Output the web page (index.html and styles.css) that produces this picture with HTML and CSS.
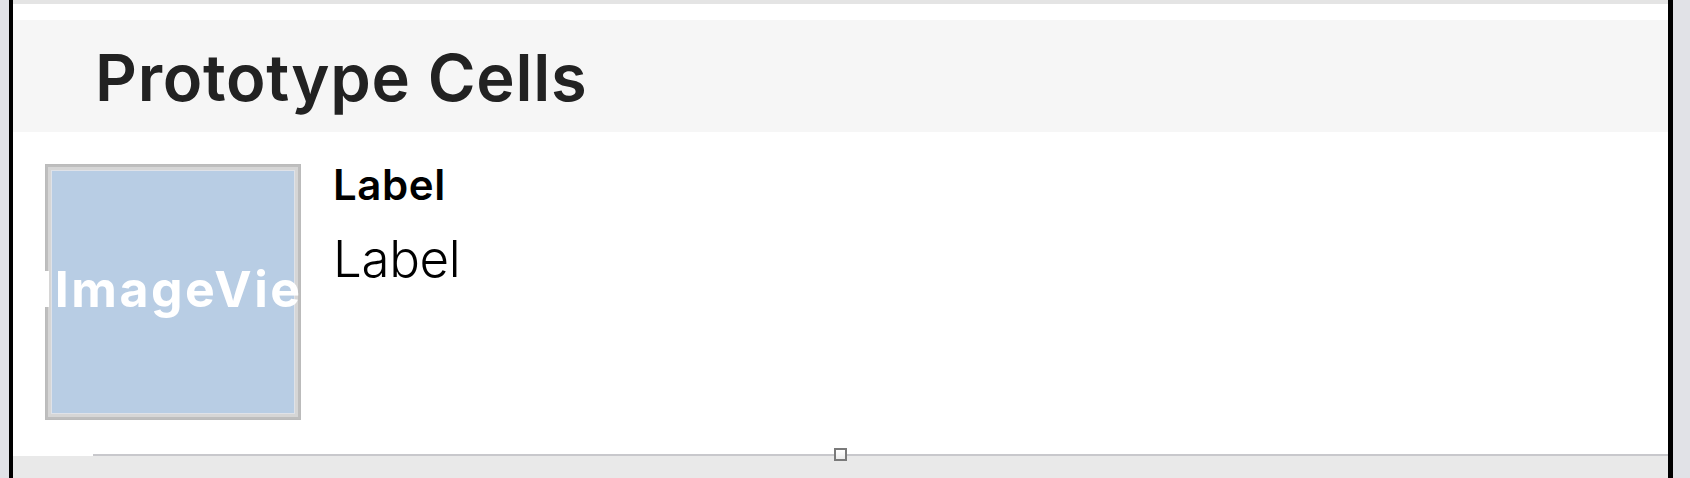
FILE: index.html
```html
<!DOCTYPE html>
<html lang="en">
<head>
<meta charset="utf-8">
<title>Prototype Cells</title>
<link rel="stylesheet" href="styles.css">
</head>
<body>
<div class="stage">
  <div class="gutter gutter-left"></div>
  <div class="device">
    <div class="top-band"></div>
    <div class="top-gap"></div>
    <header class="section-header">
      <h1 class="section-title">Prototype Cells</h1>
    </header>
    <div class="cell">
      <div class="cell-body">
        <div class="image-view">
          <span class="image-view-name">UIImageView</span>
        </div>
        <div class="labels">
          <div class="label-title">Label</div>
          <div class="label-subtitle">Label</div>
        </div>
      </div>
      <div class="separator"></div>
    </div>
    <div class="footer">
      <span class="resize-handle"></span>
    </div>
  </div>
  <div class="gutter gutter-right"></div>
</div>
</body>
</html>
```

FILE: styles.css
```css
* {
  box-sizing: border-box;
}

html,
body {
  margin: 0;
  padding: 0;
  width: 1690px;
  height: 478px;
  overflow: hidden;
  background: #e1e2e7;
  font-family: "Inter", "Noto Sans", sans-serif;
}

.stage {
  display: flex;
  height: 478px;
}

.gutter {
  background: #e1e2e7;
}

.gutter-left {
  width: 9px;
}

.gutter-right {
  width: 17px;
}

.device {
  width: 1664px;
  display: flex;
  flex-direction: column;
  border-left: 4px solid #000;
  border-right: 5px solid #000;
  background: #fff;
}

.top-band {
  height: 4px;
  background: #e4e4e4;
}

.top-gap {
  height: 16px;
  background: #fff;
}

.section-header {
  height: 112px;
  background: #f6f6f6;
  padding: 19px 0 0 82px;
}

.section-title {
  margin: 0;
  font-size: 65px;
  font-weight: 600;
  line-height: 78px;
  color: #222;
  letter-spacing: 0.7px;
}

.cell {
  display: flex;
  flex-direction: column;
  background: #fff;
}

.cell-body {
  height: 322px;
  display: flex;
  align-items: flex-start;
  gap: 32px;
  padding: 32px 0 0 32px;
}

.image-view {
  position: relative;
  width: 256px;
  height: 256px;
  flex: none;
  overflow: hidden;
  display: flex;
  align-items: center;
  justify-content: center;
  background: #b8cde4;
  box-shadow:
    inset 0 0 0 1px #bbbbbb,
    inset 0 0 0 3px #bebebe,
    inset 0 0 0 6px #d6d6d6,
    inset 0 0 0 7px #dfe2e8;
}

.image-view-name {
  white-space: nowrap;
  color: #fff;
  font-size: 50px;
  font-weight: 700;
  line-height: 58px;
  letter-spacing: 2.5px;
  margin-top: -6px;
}

.labels {
  display: flex;
  flex-direction: column;
}

.label-title {
  font-size: 42px;
  font-weight: 600;
  line-height: 42px;
  color: #000;
  letter-spacing: 0.6px;
}

.label-subtitle {
  margin-top: 22px;
  font-size: 51px;
  font-weight: 300;
  line-height: 62px;
  color: #000;
  letter-spacing: -0.3px;
}

.separator {
  height: 2px;
  margin-left: 80px;
  background: #c8c8cc;
}

.footer {
  position: relative;
  flex: 1;
  background: #e9e9e9;
}

.resize-handle {
  position: absolute;
  top: -8px;
  left: 50%;
  width: 13px;
  height: 13px;
  margin-left: -7px;
  border: 2px solid #7a7a7a;
  background: linear-gradient(#ffffff, #ececec);
}
```
